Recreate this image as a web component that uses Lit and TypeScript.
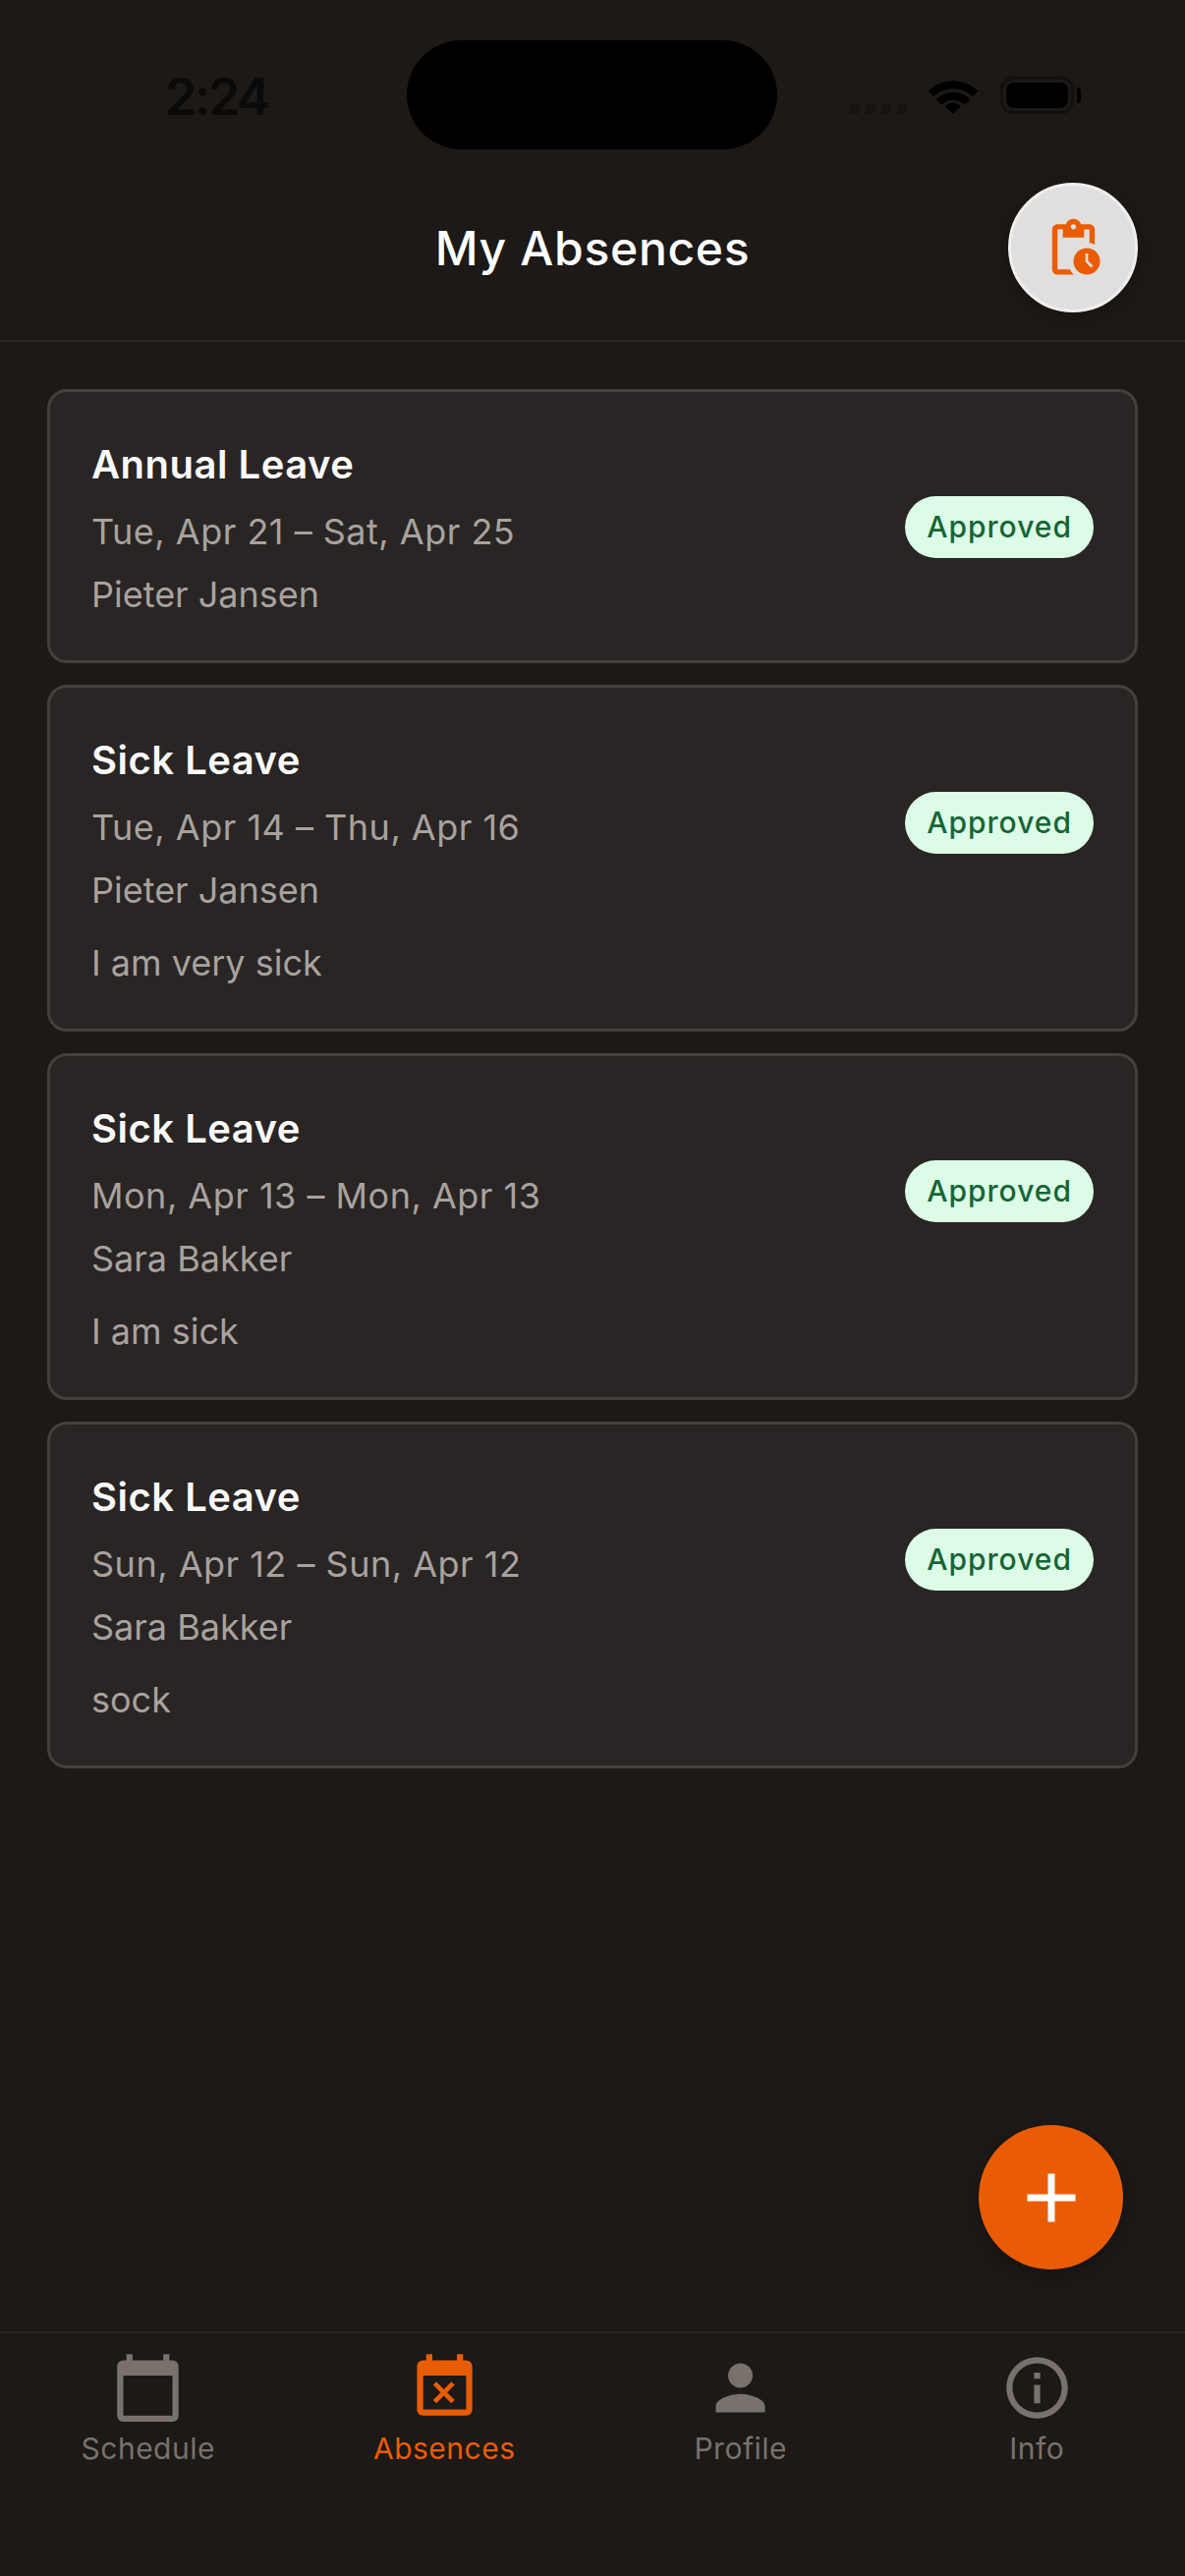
import { LitElement, html, css, svg } from 'lit';
import { customElement } from 'lit/decorators.js';

const absences = [
  { type: 'Annual Leave', dates: 'Tue, Apr 21 – Sat, Apr 25', name: 'Pieter Jansen', note: '' },
  { type: 'Sick Leave', dates: 'Tue, Apr 14 – Thu, Apr 16', name: 'Pieter Jansen', note: 'I am very sick' },
  { type: 'Sick Leave', dates: 'Mon, Apr 13 – Mon, Apr 13', name: 'Sara Bakker', note: 'I am sick' },
  { type: 'Sick Leave', dates: 'Sun, Apr 12 – Sun, Apr 12', name: 'Sara Bakker', note: 'sock' },
];

const tabs = [
  { label: 'Schedule', d: 'M20 3h-1V1h-2v2H7V1H5v2H4c-1.1 0-2 .9-2 2v16c0 1.1.9 2 2 2h16c1.1 0 2-.9 2-2V5c0-1.1-.9-2-2-2zm0 18H4V8h16v13z' },
  { label: 'Absences', active: true, d: 'M9.31 17l2.44-2.44L14.19 17l1.06-1.06-2.44-2.44 2.44-2.44L14.19 10l-2.44 2.44L9.31 10l-1.06 1.06 2.44 2.44-2.44 2.44L9.31 17zM19 3h-1V1h-2v2H8V1H6v2H5c-1.11 0-1.99.9-1.99 2L3 19c0 1.1.89 2 2 2h14c1.1 0 2-.9 2-2V5c0-1.1-.9-2-2-2zm0 16H5V8h14v11z' },
  { label: 'Profile', d: 'M12 12c2.21 0 4-1.79 4-4s-1.79-4-4-4-4 1.79-4 4 1.79 4 4 4zm0 2c-2.67 0-8 1.34-8 4v2h16v-2c0-2.66-5.33-4-8-4z' },
  { label: 'Info', d: 'M11 7h2v2h-2zm0 4h2v6h-2zm1-9C6.48 2 2 6.48 2 12s4.48 10 10 10 10-4.48 10-10S17.52 2 12 2zm0 18c-4.41 0-8-3.59-8-8s3.59-8 8-8 8 3.59 8 8-3.59 8-8 8z' },
];

const icon = (d: string, cls: string) => html`<svg class=${cls} viewBox="0 0 24 24" fill="currentColor">${svg`<path d=${d}></path>`}</svg>`;

@customElement('app-root')
export class AppRoot extends LitElement {
  static styles = css`
    :host {
      display: flex;
      flex-direction: column;
      min-height: 100vh;
      background: #1c1917;
      font-family: Inter, "Noto Sans", sans-serif;
      color: #a8a29e;
    }

    .status {
      display: grid;
      grid-template-columns: 414px 377px 1fr;
      height: 111px;
      padding-top: 41px;
    }
    .time {
      padding: 28px 0 0 168px;
      font-size: 52px;
      line-height: 60px;
      font-weight: 600;
      letter-spacing: -2.5px;
      color: #0a0a0a;
    }
    .island {
      background: #000;
      border-radius: 56px;
    }
    .indicators {
      display: flex;
      align-items: flex-end;
      height: 75px;
      padding-left: 74px;
    }
    .dots {
      display: flex;
      gap: 6px;
      margin-right: 22px;
    }
    .dots i {
      width: 10px;
      height: 10px;
      border-radius: 3px;
      background: #151412;
    }
    .wifi {
      width: 50px;
      height: 37px;
      margin-right: 23px;
    }
    .battery {
      box-sizing: border-box;
      width: 75px;
      height: 38px;
      padding: 3px;
      border: 3px solid #121110;
      border-radius: 13px;
    }
    .battery i {
      display: block;
      height: 100%;
      background: #000;
      border-radius: 8px;
    }
    .tip {
      width: 4px;
      height: 16px;
      margin: 0 0 11px 3px;
      background: #000;
      border-radius: 0 4px 4px 0;
    }

    header {
      display: grid;
      grid-template-columns: 1fr auto 1fr;
      align-items: center;
      height: 196px;
      box-sizing: border-box;
      padding: 6px 48px 0;
      border-bottom: 2px solid #292524;
    }
    h1 {
      grid-column: 2;
      margin: 2px 0 0;
      font-size: 48px;
      line-height: 64px;
      font-weight: 500;
      letter-spacing: 0.7px;
      color: #fff;
    }
    .history {
      grid-column: 3;
      justify-self: end;
      box-sizing: border-box;
      display: flex;
      align-items: center;
      justify-content: center;
      width: 132px;
      height: 132px;
      border-radius: 50%;
      background: #e0dfdd;
      border: 3px solid #f0efed;
      color: #ea5c04;
      box-shadow: 0 4px 16px rgba(0, 0, 0, 0.25);
    }
    .history svg {
      width: 65px;
      height: 65px;
    }

    main {
      flex: 1;
      position: relative;
      display: flex;
      flex-direction: column;
      gap: 22px;
      padding: 48px 48px 0;
    }
    .card {
      display: flex;
      flex-direction: column;
      padding: 42px;
      background: #292524;
      border: 3px solid #44403c;
      border-radius: 20px;
    }
    .top {
      display: flex;
      align-items: center;
      justify-content: space-between;
    }
    .title {
      font-size: 40px;
      line-height: 64px;
      font-weight: 600;
      letter-spacing: 0.5px;
      color: #fafaf9;
    }
    .line {
      font-size: 36px;
      line-height: 50px;
    }
    .dates {
      margin-top: 11px;
      letter-spacing: 0.5px;
    }
    .name {
      margin-top: 14px;
    }
    .note {
      margin-top: 24px;
    }
    .badge {
      margin-top: 2px;
      padding: 0 22px;
      font-size: 30px;
      line-height: 63px;
      font-weight: 500;
      letter-spacing: 1px;
      color: #166534;
      background: #dcfce7;
      border-radius: 32px;
    }

    .fab {
      position: absolute;
      right: 63px;
      bottom: 63px;
      display: flex;
      align-items: center;
      justify-content: center;
      width: 147px;
      height: 147px;
      border-radius: 50%;
      background: #ea5c04;
      color: #fff;
      box-shadow: 0 6px 18px rgba(0, 0, 0, 0.25);
    }
    .fab svg {
      width: 84px;
      height: 84px;
    }

    nav {
      display: grid;
      grid-template-columns: repeat(4, 1fr);
      height: 249px;
      box-sizing: border-box;
      padding-top: 18px;
      border-top: 2px solid #292524;
    }
    .tab {
      display: flex;
      flex-direction: column;
      align-items: center;
      font-size: 30px;
      line-height: 40px;
      font-weight: 400;
      letter-spacing: 0.5px;
      color: #78716c;
    }
    .tab.active {
      color: #ea5c04;
    }
    .tab svg {
      width: 75px;
      height: 75px;
      margin-bottom: 4px;
    }
  `;

  render() {
    return html`
      <div class="status">
        <div class="time">2:24</div>
        <div class="island"></div>
        <div class="indicators">
          <div class="dots"><i></i><i></i><i></i><i></i></div>
          <svg class="wifi" viewBox="0 0 50 37" fill="none" stroke="#000" stroke-width="8">
            <path d="M2.5 16.5A32 32 0 0 1 47.5 16.5"></path>
            <path d="M10.5 25A20.5 20.5 0 0 1 39.5 25"></path>
            <path d="M25 37L17 29A11.3 11.3 0 0 1 33 29Z" fill="#000" stroke="none"></path>
          </svg>
          <div class="battery"><i></i></div>
          <div class="tip"></div>
        </div>
      </div>
      <header>
        <h1>My Absences</h1>
        <div class="history">
          ${icon('M17 12c-2.76 0-5 2.24-5 5s2.24 5 5 5 5-2.24 5-5-2.24-5-5-5zm1.65 7.35L16.5 17.2V14h1v2.79l1.85 1.85-.7.71zM18 3h-3.18C14.4 1.84 13.3 1 12 1s-2.4.84-2.82 2H6c-1.1 0-2 .9-2 2v15c0 1.1.9 2 2 2h6.11c-.59-.57-1.07-1.25-1.42-2H6V5h2v3h8V5h2v5.08c.71.1 1.38.31 2 .6V5c0-1.1-.9-2-2-2zm-6 2c-.55 0-1-.45-1-1s.45-1 1-1 1 .45 1 1-.45 1-1 1z', '')}
        </div>
      </header>
      <main>
        ${absences.map((a) => html`
          <div class="card">
            <div class="top">
              <div>
                <div class="title">${a.type}</div>
                <div class="line dates">${a.dates}</div>
                <div class="line name">${a.name}</div>
              </div>
              <div class="badge">Approved</div>
            </div>
            ${a.note ? html`<div class="line note">${a.note}</div>` : ''}
          </div>
        `)}
        <div class="fab">${icon('M19 13h-6v6h-2v-6H5v-2h6V5h2v6h6v2z', '')}</div>
      </main>
      <nav>
        ${tabs.map((t) => html`
          <div class="tab ${t.active ? 'active' : ''}">
            ${icon(t.d, '')}
            <span>${t.label}</span>
          </div>
        `)}
      </nav>
    `;
  }
}
